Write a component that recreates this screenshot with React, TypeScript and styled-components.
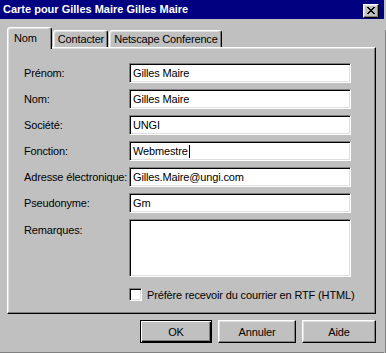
import React from 'react';
import styled, {createGlobalStyle} from 'styled-components';

const GlobalStyle = createGlobalStyle`
    html, body {
        margin: 0;
        padding: 0;
        background-color: #c0c0c0;
    }
    body {
        font-family: "Liberation Sans", Arial, sans-serif;
        font-size: 11px;
        letter-spacing: -0.15px;
        color: #000;
    }
`;

const fields: {label: string, value: string, caret?: boolean}[] = [
    {label: 'Prénom:', value: 'Gilles Maire'},
    {label: 'Nom:', value: 'Gilles Maire'},
    {label: 'Société:', value: 'UNGI'},
    {label: 'Fonction:', value: 'Webmestre', caret: true},
    {label: 'Adresse électronique:', value: 'Gilles.Maire@ungi.com'},
    {label: 'Pseudonyme:', value: 'Gm'}
];

const tabs = ['Nom', 'Contacter', 'Netscape Conference'];

const App: React.FunctionComponent = () => {
    return (
        <>
            <GlobalStyle/>
            <Screen>
                <Window>
                    <TitleBar>
                        <Title>Carte pour Gilles Maire Gilles Maire</Title>
                        <CloseButton type="button">
                            <svg width="8" height="7" viewBox="0 0 8 7" shapeRendering="crispEdges">
                                <path d="M0 0h2v1h-2zM6 0h2v1h-2zM1 1h2v1h-2zM5 1h2v1h-2zM2 2h4v1h-4zM3 3h2v1h-2zM2 4h4v1h-4zM1 5h2v1h-2zM5 5h2v1h-2zM0 6h2v1h-2zM6 6h2v1h-2z" fill="#000"/>
                            </svg>
                        </CloseButton>
                    </TitleBar>
                    <Body>
                        <TabRow>
                            {tabs.map((tab, index) => (
                                <Tab key={tab} $active={index === 0}>{tab}</Tab>
                            ))}
                        </TabRow>
                        <Panel>
                            <Form>
                                {fields.map(field => (
                                    <React.Fragment key={field.label}>
                                        <Label>{field.label}</Label>
                                        <TextBox>
                                            {field.value}
                                            {field.caret && <Caret/>}
                                        </TextBox>
                                    </React.Fragment>
                                ))}
                                <Label $top>Remarques:</Label>
                                <TextBox $multiline/>
                                <CheckRow>
                                    <CheckBox/>
                                    <span>Préfère recevoir du courrier en RTF (HTML)</span>
                                </CheckRow>
                            </Form>
                        </Panel>
                        <ButtonRow>
                            <Button type="button" $width={72} $default>OK</Button>
                            <Button type="button" $width={78}>Annuler</Button>
                            <Button type="button" $width={74}>Aide</Button>
                        </ButtonRow>
                    </Body>
                </Window>
                <Backdrop/>
            </Screen>
        </>
    );
}

const Screen = styled.div`
    display: flex;
    width: 386px;
    height: 353px;
    overflow: hidden;
`;

const Window = styled.div`
    display: flex;
    flex-direction: column;
    width: 384px;
    height: 353px;
    box-sizing: border-box;
    background-color: #c0c0c0;
    border-bottom: 1px solid #808080;
`;

const Backdrop = styled.div`
    width: 1px;
    margin-top: 30px;
    border-right: 1px solid #808080;
`;

const TitleBar = styled.div`
    display: flex;
    align-items: center;
    justify-content: space-between;
    height: 19px;
    padding: 0 5px 0 3px;
    background-color: #000080;
`;

const Title = styled.span`
    color: #fff;
    font-weight: bold;
    font-size: 11px;
    line-height: 13px;
    letter-spacing: 0;
    white-space: nowrap;
`;

const CloseButton = styled.button`
    display: flex;
    align-items: center;
    justify-content: center;
    width: 16px;
    height: 14px;
    margin-top: 2px;
    padding: 0;
    box-sizing: border-box;
    background-color: #c0c0c0;
    border: 1px solid;
    border-color: #fff #000 #000 #fff;
    box-shadow: inset -1px -1px #808080, inset 1px 1px #dfdfdf;
`;

const Body = styled.div`
    display: flex;
    flex-direction: column;
    padding: 8px 8px 0 7px;
`;

const TabRow = styled.div`
    display: flex;
    align-items: flex-end;
    height: 20px;
`;

const Tab = styled.div<{$active?: boolean}>`
    position: relative;
    z-index: ${props => props.$active ? 1 : 0};
    display: flex;
    align-items: ${props => props.$active ? 'flex-start' : 'center'};
    box-sizing: border-box;
    height: ${props => props.$active ? '22px' : '17px'};
    margin-bottom: ${props => props.$active ? '-2px' : '0'};
    margin-right: 1px;
    padding: ${props => props.$active ? '4px 14px 0 6px' : '0 3px 0 4px'};
    background-color: #c0c0c0;
    border: 1px solid;
    border-bottom: none;
    border-color: #fff #000 transparent #fff;
    border-radius: 3px 3px 0 0;
    box-shadow: inset -1px 0 #808080, inset 1px 1px #dfdfdf;
    line-height: 13px;
    white-space: nowrap;
`;

const Panel = styled.div`
    box-sizing: border-box;
    width: 369px;
    height: 267px;
    border: 1px solid;
    border-color: #fff #000 #000 #fff;
    box-shadow: inset -1px -1px #808080, inset 1px 1px #dfdfdf;
    padding: 15px 0 0 16px;
`;

const Form = styled.div`
    display: grid;
    grid-template-columns: 105px 222px;
    grid-template-rows: repeat(6, 20px) 58px 13px;
    row-gap: 6px;
`;

const Label = styled.div<{$top?: boolean}>`
    line-height: 20px;
    padding-top: ${props => props.$top ? '1px' : '0'};
    white-space: nowrap;
`;

const TextBox = styled.div<{$multiline?: boolean}>`
    display: flex;
    align-items: center;
    box-sizing: border-box;
    height: ${props => props.$multiline ? '58px' : '20px'};
    padding: 0 3px;
    background-color: #fff;
    border: 1px solid;
    border-color: #808080 #fff #fff #808080;
    box-shadow: inset 1px 1px #000, inset -1px -1px #dfdfdf;
    white-space: nowrap;
`;

const Caret = styled.span`
    display: inline-block;
    width: 1px;
    height: 13px;
    margin-left: 1px;
    background-color: #000;
`;

const CheckRow = styled.div`
    grid-column: 2;
    display: flex;
    align-items: center;
    gap: 5px;
    margin-top: 5px;
    height: 13px;
    white-space: nowrap;
`;

const CheckBox = styled.div`
    flex: none;
    box-sizing: border-box;
    width: 13px;
    height: 13px;
    background-color: #fff;
    border: 1px solid;
    border-color: #808080 #fff #fff #808080;
    box-shadow: inset 1px 1px #000, inset -1px -1px #dfdfdf;
`;

const ButtonRow = styled.div`
    display: flex;
    justify-content: flex-end;
    gap: 6px;
    margin-top: 6px;
`;

const Button = styled.button<{$width: number, $default?: boolean}>`
    box-sizing: border-box;
    width: ${props => props.$width}px;
    height: 23px;
    padding: 0;
    font-family: "Liberation Sans", Arial, sans-serif;
    font-size: 11px;
    letter-spacing: -0.15px;
    color: #000;
    background-color: #c0c0c0;
    border: 1px solid;
    border-color: ${props => props.$default ? '#000' : '#fff #000 #000 #fff'};
    box-shadow: ${props => props.$default
        ? 'inset 1px 1px #fff, inset -1px -1px #000, inset -2px -2px #808080'
        : 'inset -1px -1px #808080, inset 1px 1px #dfdfdf'};
`;

export default App;
